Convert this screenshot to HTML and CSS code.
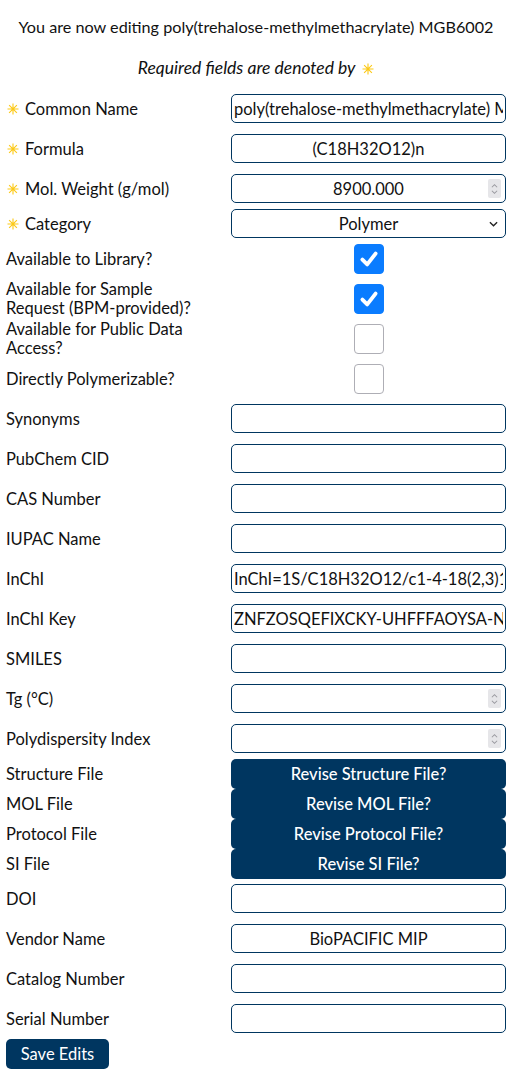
FILE: index.html
```html
<!DOCTYPE html>
<html lang="en">
<head>
<meta charset="utf-8">
<title>Edit Monomer</title>
<link rel="stylesheet" href="styles.css">
</head>
<body>
<p class="title">You are now editing poly(trehalose-methylmethacrylate) MGB6002</p>
<p class="note">Required fields are denoted by <svg class="ast" viewBox="0 0 12 12"><path d="M6 0.5V11.5M0.5 6H11.5M2.1 2.1L9.9 9.9M9.9 2.1L2.1 9.9"/></svg></p>

<form class="form">
  <label class="lab"><svg class="ast" viewBox="0 0 12 12"><path d="M6 0.5V11.5M0.5 6H11.5M2.1 2.1L9.9 9.9M9.9 2.1L2.1 9.9"/></svg>Common Name</label>
  <input class="inp" type="text" value="poly(trehalose-methylmethacrylate) MGB6002">

  <label class="lab"><svg class="ast" viewBox="0 0 12 12"><path d="M6 0.5V11.5M0.5 6H11.5M2.1 2.1L9.9 9.9M9.9 2.1L2.1 9.9"/></svg>Formula</label>
  <input class="inp" type="text" value="(C18H32O12)n">

  <label class="lab"><svg class="ast" viewBox="0 0 12 12"><path d="M6 0.5V11.5M0.5 6H11.5M2.1 2.1L9.9 9.9M9.9 2.1L2.1 9.9"/></svg>Mol. Weight (g/mol)</label>
  <span class="num"><input class="inp" type="text" value="8900.000"><span class="spin"><svg viewBox="0 0 10 16"><path d="M2 6L5 3L8 6M2 10L5 13L8 10"/></svg></span></span>

  <label class="lab"><svg class="ast" viewBox="0 0 12 12"><path d="M6 0.5V11.5M0.5 6H11.5M2.1 2.1L9.9 9.9M9.9 2.1L2.1 9.9"/></svg>Category</label>
  <span class="selwrap"><select class="sel"><option>Polymer</option><option>Monomer</option></select><svg class="chev" viewBox="0 0 10 6"><path d="M1 1L5 5L9 1"/></svg></span>

  <label class="lab">Available to Library?</label>
  <span class="cbcell"><span class="cb on"><svg viewBox="0 0 20 20"><path d="M4.5 10.5L8.5 14.5L15.5 5.5"/></svg></span></span>

  <label class="lab narrow">Available for Sample Request (BPM-provided)?</label>
  <span class="cbcell"><span class="cb on"><svg viewBox="0 0 20 20"><path d="M4.5 10.5L8.5 14.5L15.5 5.5"/></svg></span></span>

  <label class="lab narrow">Available for Public Data Access?</label>
  <span class="cbcell"><span class="cb"></span></span>

  <label class="lab">Directly Polymerizable?</label>
  <span class="cbcell"><span class="cb"></span></span>

  <label class="lab">Synonyms</label>
  <input class="inp" type="text" value="">

  <label class="lab">PubChem CID</label>
  <input class="inp" type="text" value="">

  <label class="lab">CAS Number</label>
  <input class="inp" type="text" value="">

  <label class="lab">IUPAC Name</label>
  <input class="inp" type="text" value="">

  <label class="lab">InChI</label>
  <input class="inp" type="text" value="InChI=1S/C18H32O12/c1-4-18(2,3)17(26)27-5-7-9(19)11(21)13(23)15(28-7)30-16-14(24)12(22)10(20)8(6-25)29-16/h7-16,19-25H,4-6H2,1-3H3">

  <label class="lab">InChI Key</label>
  <input class="inp" type="text" value="ZNFZOSQEFIXCKY-UHFFFAOYSA-N">

  <label class="lab">SMILES</label>
  <input class="inp" type="text" value="">

  <label class="lab">Tg (°C)</label>
  <span class="num"><input class="inp" type="text" value=""><span class="spin"><svg viewBox="0 0 10 16"><path d="M2 6L5 3L8 6M2 10L5 13L8 10"/></svg></span></span>

  <label class="lab">Polydispersity Index</label>
  <span class="num"><input class="inp" type="text" value=""><span class="spin"><svg viewBox="0 0 10 16"><path d="M2 6L5 3L8 6M2 10L5 13L8 10"/></svg></span></span>

  <label class="lab">Structure File</label>
  <button class="fbtn" type="button">Revise Structure File?</button>

  <label class="lab">MOL File</label>
  <button class="fbtn" type="button">Revise MOL File?</button>

  <label class="lab">Protocol File</label>
  <button class="fbtn" type="button">Revise Protocol File?</button>

  <label class="lab">SI File</label>
  <button class="fbtn" type="button">Revise SI File?</button>

  <label class="lab">DOI</label>
  <input class="inp" type="text" value="">

  <label class="lab">Vendor Name</label>
  <input class="inp" type="text" value="BioPACIFIC MIP">

  <label class="lab">Catalog Number</label>
  <input class="inp" type="text" value="">

  <label class="lab">Serial Number</label>
  <input class="inp" type="text" value="">

  <div class="actions"><button class="save" type="button">Save Edits</button></div>
</form>
</body>
</html>
```

FILE: styles.css
```css
* { box-sizing: border-box; }
html, body { margin: 0; padding: 0; background: #fff; }
body {
  font-family: Lato, "Noto Sans", "Liberation Sans", sans-serif;
  font-size: 16.5px;
  color: #111;
  width: 512px;
}
.title {
  margin: 17px 0 0;
  line-height: 20px;
  font-size: 16.2px;
  text-align: center;
}
.note {
  margin: 21px 0 0;
  line-height: 20px;
  font-size: 17.5px;
  text-align: center;
  font-style: italic;
}
.ast {
  width: 12px;
  height: 12px;
  fill: none;
  stroke: #fcc917;
  stroke-width: 1.1;
  vertical-align: -1px;
}
.note .ast { margin-left: 3px; }
.form {
  display: grid;
  grid-template-columns: 225px 275px;
  padding: 0 6px;
  margin-top: 11px;
  align-items: center;
}
.lab {
  display: flex;
  align-items: center;
  line-height: 19px;
  padding-right: 20px;
}
.lab .ast { margin: 0 6px 0 1px; flex: none; }
.lab.narrow { padding-right: 28px; }
.inp {
  display: block;
  width: 275px;
  height: 29px;
  margin: 5px 0 6px;
  padding: 0 2px;
  border: 1px solid #003660;
  border-radius: 5px;
  font: inherit;
  color: #111;
  text-align: center;
  background: #fff;
  outline: none;
}
.num { position: relative; display: block; }
.spin {
  position: absolute;
  right: 5px;
  top: 10px;
  width: 13px;
  height: 19px;
  background: #e6e6e9;
  border-radius: 2px;
  display: flex;
  align-items: center;
  justify-content: center;
}
.spin svg { width: 9px; height: 14px; fill: none; stroke: #9a9aa0; stroke-width: 1.2; }
.selwrap { position: relative; display: block; margin: 0 0 1px; }
.sel {
  display: block;
  width: 275px;
  height: 29px;
  -webkit-appearance: none;
  appearance: none;
  border: 1px solid #003660;
  border-radius: 5px;
  background: #fff;
  font: inherit;
  color: #111;
  text-align: center;
  text-align-last: center;
  padding: 0 20px;
}
.chev {
  position: absolute;
  right: 8px;
  top: 12px;
  width: 9px;
  height: 6px;
  fill: none;
  stroke: #222;
  stroke-width: 1.5;
}
.cbcell {
  display: flex;
  justify-content: center;
  margin: 5px 0;
}
.cb {
  width: 30px;
  height: 30px;
  border: 1px solid #aeaeb5;
  border-radius: 4px;
  background: #fff;
  display: flex;
  align-items: center;
  justify-content: center;
}
.cb.on { background: #0a7cff; border-color: #0a7cff; }
.cb svg { width: 24px; height: 24px; fill: none; stroke: #fff; stroke-width: 3.2; stroke-linecap: round; stroke-linejoin: round; }
.fbtn {
  display: block;
  width: 275px;
  height: 30px;
  margin: 0;
  border: 0;
  border-radius: 5px;
  background: #003660;
  color: #fff;
  font: inherit;
  font-weight: 500;
  padding: 0;
}
.actions { grid-column: 1 / -1; }
.save {
  display: block;
  width: 103px;
  height: 30px;
  margin: 0;
  border: 0;
  border-radius: 5px;
  background: #003660;
  color: #fff;
  font: inherit;
  padding: 0;
}
```
